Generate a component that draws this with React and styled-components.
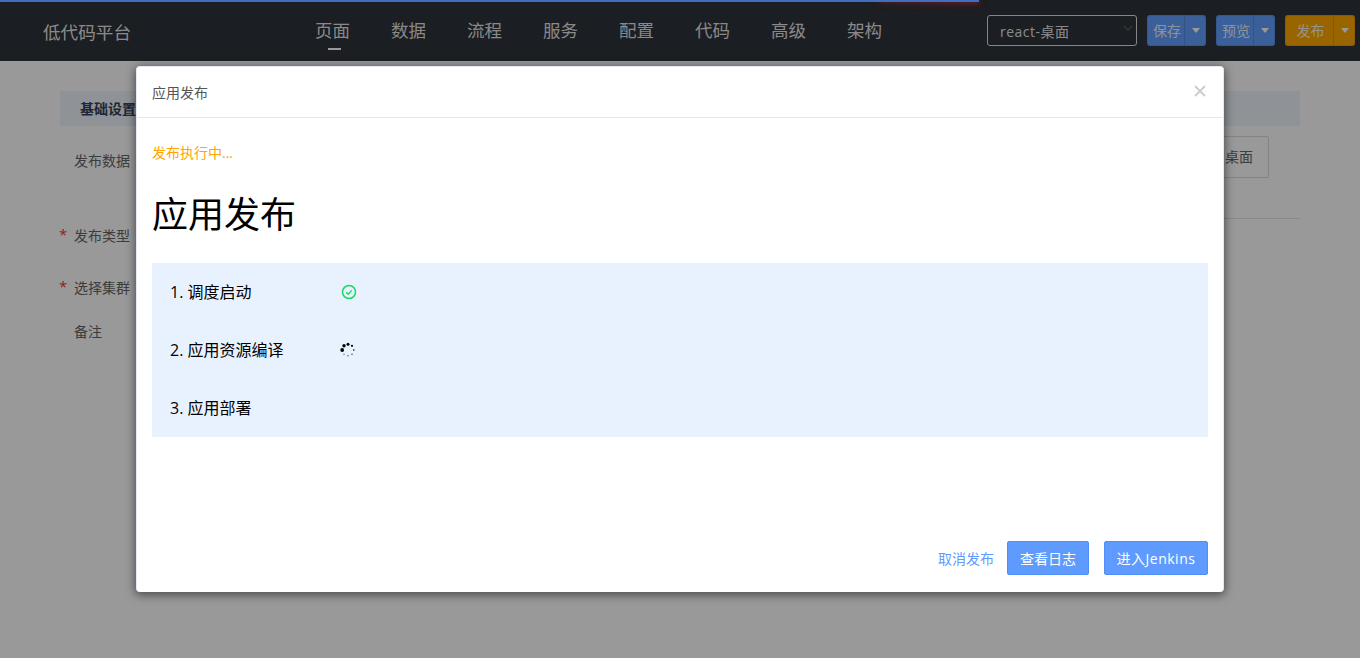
import React from "react";
import styled, { createGlobalStyle } from "styled-components";

const Global = createGlobalStyle`
  html, body { margin: 0; padding: 0; height: 658px; overflow: hidden; background: #fff; }
  body { font-family: "Open Sans", "Noto Sans CJK SC", sans-serif; font-size: 14px; }
  * { box-sizing: border-box; }
`;

const Page = styled.div`
  width: 1360px;
  height: 658px;
  position: relative;
  overflow: hidden;
  background: #fff;
`;
const Navbar = styled.header`
  height: 61px;
  background: #2e3239;
  display: flex;
  align-items: flex-start;
`;
const LoadingBar = styled.div`
  position: absolute;
  left: 0;
  top: 0;
  width: 979px;
  height: 2px;
  background: #406fbf;
`;
const LoadingPeg = styled.div`
  position: absolute;
  left: 879px;
  top: 0;
  width: 100px;
  height: 2px;
  box-shadow: 0 0 10px #a01f2a, 0 0 5px #a01f2a;
  transform: rotate(1.5deg) translate(0, -1px);
`;
const Brand = styled.div`
  width: 315px;
  padding: 21px 0 0 43px;
  font-size: 17.6px;
  line-height: 22px;
  color: rgba(255,255,255,.9);
`;
const Nav = styled.nav`
  display: flex;
  gap: 41px;
  width: 672px;
`;
const NavItem = styled.div`
  width: 35px;
  height: 61px;
  padding-top: 19px;
  font-size: 17.5px;
  line-height: 22px;
  color: rgba(255,255,255,.88);
  white-space: nowrap;
  position: relative;
  &::after {
    content: "";
    display: ${p => (p.$active ? "block" : "none")};
    position: absolute;
    left: 13px;
    top: 48px;
    width: 13px;
    height: 2px;
    background: #fff;
  }
`;
const Select = styled.div`
  width: 150px;
  height: 31px;
  margin-top: 15px;
  border: 1px solid #e0e0e0;
  border-radius: 3px;
  padding-left: 12px;
  font-size: 14px;
  letter-spacing: 0.5px;
  color: rgba(255,255,255,.9);
  display: flex;
  align-items: center;
  justify-content: space-between;
  svg { margin-right: 3px; margin-top: -4px; }
`;
const SplitGroup = styled.div`
  display: flex;
  height: 31px;
  margin: 15px 0 0 10px;
  border-radius: 3px;
  overflow: hidden;
  background: ${p => p.$color};
  box-shadow: inset 0 0 0 1px rgba(0,0,0,.08);
  color: rgba(255,255,255,.9);
`;
const SplitMain = styled.div`
  width: ${p => p.$w}px;
  line-height: 32px;
  padding-left: 3px;
  text-align: center;
  font-size: 14px;
  border-right: 1px solid rgba(0,0,0,.12);
`;
const SplitCaret = styled.div`
  width: 21px;
  display: flex;
  align-items: center;
  justify-content: center;
  &::after {
    content: "";
    border-left: 4px solid transparent;
    border-right: 4px solid transparent;
    border-top: 5px solid #fff;
  }
`;
const Content = styled.main`
  padding: 30px 60px 0;
`;
const SectionBar = styled.div`
  height: 35px;
  background: #eef3fb;
  padding-left: 20px;
  font-size: 14px;
  font-weight: 700;
  line-height: 35px;
  color: #34405a;
`;
const DataRow = styled.div`
  display: flex;
  justify-content: space-between;
  height: 92px;
  padding: 10px 31px 0 14px;
`;
const Divider = styled.hr`
  margin: 0 0 0 200px;
  border: 0;
  height: 1px;
  background: #dfe3ea;
`;
const FormLabel = styled.label`
  display: block;
  position: relative;
  font-size: 14px;
  line-height: 20px;
  color: #666;
  padding-top: ${p => p.$top || 0}px;
`;
const DesktopBtn = styled.div`
  width: 160px;
  height: 42px;
  border: 1px solid #d6dae4;
  border-radius: 2px;
  line-height: 40px;
  text-align: right;
  padding-right: 15px;
  color: #666;
`;
const FormRow = styled.div`
  height: ${p => p.$h}px;
  padding-left: 14px;
`;
const Star = styled.span`
  position: absolute;
  left: -15px;
  top: ${p => p.$top || 0}px;
  color: #f5323c;
  font-size: 15px;
`;
const Overlay = styled.div`
  position: absolute;
  inset: 0;
  background: rgba(0,0,0,.4);
`;
const Modal = styled.div`
  width: 1088px;
  height: 526px;
  margin: 66px auto 0;
  background: #fff;
  border: 1px solid #e4e9f2;
  border-bottom: 0;
  border-radius: 4px;
  box-shadow: 0 2px 10px 1px rgba(0,0,0,.5);
  display: flex;
  flex-direction: column;
`;
const ModalHeader = styled.div`
  height: 51px;
  flex: none;
  border-bottom: 1px solid #e2e6ef;
  padding: 0 15px;
  display: flex;
  align-items: center;
  justify-content: space-between;
  font-size: 14px;
  color: #555;
  svg { margin-top: -3px; margin-right: 2px; }
`;
const ModalBody = styled.div`
  flex: 1;
  padding: 25px 15px 0;
`;
const Status = styled.div`
  font-size: 14px;
  line-height: 20px;
  color: #ffa500;
`;
const Title = styled.h1`
  margin: 28px 0 0;
  font-size: 36px;
  font-weight: 400;
  line-height: 48px;
  color: #000;
`;
const Steps = styled.div`
  margin-top: 24px;
  background: #e8f2ff;
  height: 174px;
  padding-left: 18px;
`;
const Step = styled.div`
  display: flex;
  align-items: center;
  height: 58px;
  color: #000;
  font-size: 16px;
`;
const StepName = styled.div`
  width: 171px;
  flex: none;
  margin-top: -3px;
`;
const SpinnerIcon = styled.svg`
  margin: -1px 0 0 -1px;
`;
const ModalFooter = styled.div`
  flex: none;
  height: 51px;
  padding: 0 15px;
  display: flex;
  align-items: flex-start;
  justify-content: flex-end;
`;
const LinkBtn = styled.div`
  color: #5f9bff;
  font-size: 14px;
  line-height: 36px;
  margin-right: 13px;
`;
const PrimaryBtn = styled.div`
  height: 34px;
  width: ${p => p.$w}px;
  margin-left: ${p => p.$ml || 0}px;
  background: #5f9bff;
  border: 1px solid #4f8ff7;
  border-radius: 2px;
  color: #fff;
  font-size: 14px;
  line-height: 34px;
  text-align: center;
  letter-spacing: ${p => p.$ls || 0}px;
  white-space: nowrap;
`;

const navs = ["页面", "数据", "流程", "服务", "配置", "代码", "高级", "架构"];

const Check = () => (
  <svg width="16" height="16" viewBox="0 0 16 16" fill="none" stroke="#19d95f">
    <circle cx="8" cy="8" r="6.5" strokeWidth="1.5" />
    <path d="M5.2 8.2l2 2 3.6-3.8" strokeWidth="1.3" />
  </svg>
);
const Spinner = () => {
  const dots = [
    [8, 2.2, 1.5], [12, 3.8, 1.1], [13.8, 8, .8], [12, 12.2, .6],
    [8, 13.8, .6], [4, 12.2, .5], [2.2, 8, 1.9], [4, 3.8, 1.7],
  ];
  return (
    <SpinnerIcon width="16" height="16" viewBox="0 0 16 16" fill="#000">
      {dots.map(([x, y, r], i) => <circle key={i} cx={x} cy={y} r={r} />)}
    </SpinnerIcon>
  );
};

export default function App() {
  return (
    <Page>
      <Global />
      <Navbar>
        <Brand>低代码平台</Brand>
        <Nav>
          {navs.map((n, i) => <NavItem key={n} $active={i === 0}>{n}</NavItem>)}
        </Nav>
        <Select>
          react-桌面
          <svg width="10" height="7" viewBox="0 0 10 7" fill="none" stroke="#555" strokeWidth="1.6"><path d="M1 1l4 4 4-4" /></svg>
        </Select>
        <SplitGroup $color="#629fff"><SplitMain $w={38}>保存</SplitMain><SplitCaret /></SplitGroup>
        <SplitGroup $color="#629fff"><SplitMain $w={38}>预览</SplitMain><SplitCaret /></SplitGroup>
        <SplitGroup $color="#ffa800"><SplitMain $w={49}>发布</SplitMain><SplitCaret /></SplitGroup>
      </Navbar>
      <Content>
        <SectionBar>基础设置</SectionBar>
        <DataRow>
          <FormLabel $top={15}>发布数据</FormLabel>
          <DesktopBtn>桌面</DesktopBtn>
        </DataRow>
        <Divider />
        <FormRow $h={53}><FormLabel $top={7}><Star $top={5}>*</Star>发布类型</FormLabel></FormRow>
        <FormRow $h={50}><FormLabel $top={6}><Star $top={4}>*</Star>选择集群</FormLabel></FormRow>
        <FormRow $h={40}><FormLabel $top={0}>备注</FormLabel></FormRow>
      </Content>
      <Overlay>
        <Modal>
          <ModalHeader>
            应用发布
            <svg width="12" height="12" viewBox="0 0 12 12" stroke="#ccc" strokeWidth="1.8"><path d="M1 1l10 10M11 1L1 11" /></svg>
          </ModalHeader>
          <ModalBody>
            <Status>发布执行中...</Status>
            <Title>应用发布</Title>
            <Steps>
              <Step><StepName>1. 调度启动</StepName><Check /></Step>
              <Step><StepName>2. 应用资源编译</StepName><Spinner /></Step>
              <Step><StepName>3. 应用部署</StepName></Step>
            </Steps>
          </ModalBody>
          <ModalFooter>
            <LinkBtn>取消发布</LinkBtn>
            <PrimaryBtn $w={82}>查看日志</PrimaryBtn>
            <PrimaryBtn $w={104} $ml={15} $ls={0.5}>进入Jenkins</PrimaryBtn>
          </ModalFooter>
        </Modal>
      </Overlay>
      <LoadingPeg />
      <LoadingBar />
    </Page>
  );
}
